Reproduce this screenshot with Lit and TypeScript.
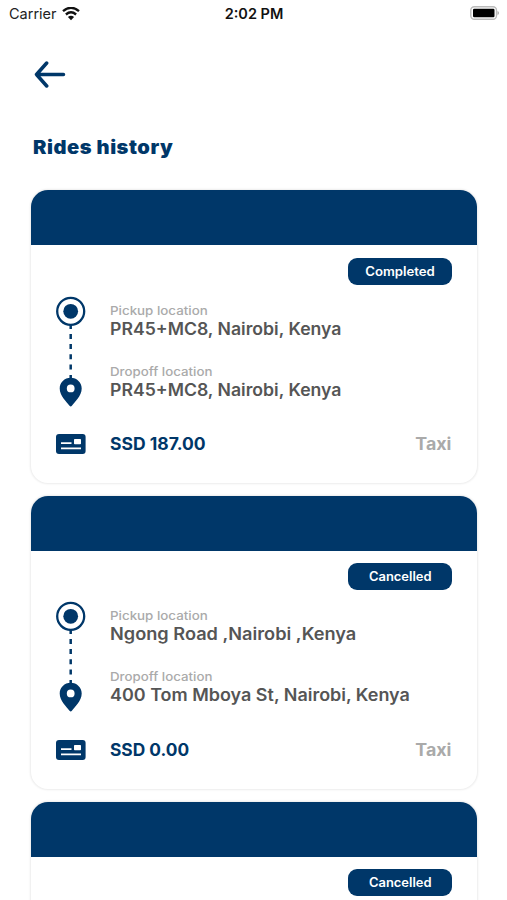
import { LitElement, html, css, svg, nothing } from "lit";
import { customElement, property } from "lit/decorators.js";

interface Label { text: string; stretch: number }
interface Trip { pickup: Label; dropoff: Label; fare: Label }
interface Ride { status: Label; trip?: Trip }

const rides: Ride[] = [
  {
    status: { text: "Completed", stretch: 1.055 },
    trip: {
      pickup: { text: "PR45+MC8, Nairobi, Kenya", stretch: 1.052 },
      dropoff: { text: "PR45+MC8, Nairobi, Kenya", stretch: 1.052 },
      fare: { text: "SSD 187.00", stretch: 1.03 },
    },
  },
  {
    status: { text: "Cancelled", stretch: 1.037 },
    trip: {
      pickup: { text: "Ngong Road ,Nairobi ,Kenya", stretch: 1.083 },
      dropoff: { text: "400 Tom Mboya St, Nairobi, Kenya", stretch: 1.07 },
      fare: { text: "SSD 0.00", stretch: 1.02 },
    },
  },
  { status: { text: "Cancelled", stretch: 1.037 } },
];

const wide = (l: Label) => html`<span class="wide" style="transform:scaleX(${l.stretch})">${l.text}</span>`;

@customElement("ride-card")
class RideCard extends LitElement {
  @property({ attribute: false }) ride!: Ride;

  static styles = css`
    :host { display: block; height: 293px; box-sizing: border-box; border-radius: 17px; background: #fff;
      box-shadow: 0 0 2px 1px #ececec; overflow: hidden; color: #003769; }
    .band { height: 55px; background: #003769; }
    .body { padding: 12.5px 25px 0; }
    .wide { display: inline-block; transform-origin: left; white-space: nowrap; }
    .status .wide { transform-origin: center; position: relative; left: 0.5px; }
    .kind .wide { transform-origin: right; }
    .status { margin-left: auto; width: 104px; height: 27px; border-radius: 9px; background: #003769; color: #fff;
      font-size: 12.5px; font-weight: 600; line-height: 27px; text-align: center; }
    .trip { display: grid; grid-template-columns: 30px 1fr; column-gap: 24px; margin-top: 11px; height: 112px; }
    .stops { padding-top: 7px; }
    .stop { height: 60.7px; }
    .caption { font-size: 12.2px; line-height: 16px; color: #aaa; font-weight: 500; }
    .place { font-size: 16.8px; line-height: 20px; color: #555; font-weight: 600; }
    .foot { display: flex; align-items: center; height: 22px; margin-top: 25.5px; font-size: 17px; font-weight: 700; }
    .fare { margin-left: 24px; }
    .kind { margin-left: auto; color: #aaa; font-weight: 650; }
    svg { display: block; flex: none; }
  `;

  private details(t: Trip) {
    return html`
      <div class="trip">
        <svg width="30" height="112" viewBox="0 0 30 112">
          ${svg`
          <circle cx="14.7" cy="15.3" r="13.5" fill="none" stroke="#003769" stroke-width="2.3"/>
          <circle cx="14.7" cy="15.3" r="7.4" fill="#003769"/>
          <path d="M14.7 29v4M14.7 38v5M14.7 48v5M14.7 58.3v5M14.7 68.6v5M14.7 79v4" stroke="#003769" stroke-width="2.5"/>
          <path fill-rule="evenodd" fill="#003769" d="M14.7 81.700C8.500 81.700 3.700 86.500 3.700 92.500c0 7.500 7 13.400 9.800 17.300q1.200 1.500 2.400 0C18.700 105.900 25.700 100 25.700 92.500c0-6-4.800-10.800-11-10.800ZM14.700 88.500a3.900 3.900 0 1 1 0 7.800a3.900 3.900 0 0 1 0-7.800Z"/>`}
        </svg>
        <div class="stops">
          <div class="stop">
            <div class="caption">${wide({ text: "Pickup location", stretch: 1.095 })}</div>
            <div class="place">${wide(t.pickup)}</div>
          </div>
          <div class="stop">
            <div class="caption">${wide({ text: "Dropoff location", stretch: 1.09 })}</div>
            <div class="place">${wide(t.dropoff)}</div>
          </div>
        </div>
      </div>
      <div class="foot">
        <svg width="30" height="20" viewBox="0 0 30 20">
          <rect width="29.6" height="20" rx="3" fill="#003769"/>
          <rect x="18" y="5" width="7" height="5.3" rx=".8" fill="#fff"/>
          <path d="M5 9.2h10.5M5 14.4h20" stroke="#fff" stroke-width="1.7"/>
        </svg>
        <span class="fare">${wide(t.fare)}</span>
        <span class="kind">${wide({ text: "Taxi", stretch: 1.05 })}</span>
      </div>`;
  }

  render() {
    const r = this.ride;
    return html`
      <div class="band"></div>
      <div class="body">
        <div class="status">${wide(r.status)}</div>
        ${r.trip ? this.details(r.trip) : nothing}
      </div>`;
  }
}

@customElement("app-root")
class AppRoot extends LitElement {
  static styles = css`
    :host { display: block; height: 900px; overflow: hidden; background: #fff; font-family: Inter, sans-serif; }
    .bar { display: grid; grid-template-columns: 1fr auto 1fr; align-items: center; height: 27px; padding: 0 8px 0 9px;
      font-size: 14.5px; color: #222; }
    .carrier { display: flex; align-items: center; gap: 5.5px; }
    .time { font-weight: 600; color: #111; }
    .battery { justify-self: end; margin-bottom: 1px; }
    svg { display: block; }
    .back { margin: 34px 0 0 34px; }
    .title { margin: 47px 0 0 33px; height: 24px; line-height: 24px; font-size: 18.8px; font-weight: 900; color: #003769; letter-spacing: .5px; }
    .title span { display: inline-block; transform: scaleX(1.07); transform-origin: left; }
    .list { display: flex; flex-direction: column; gap: 12.6px; margin: 30.4px 30.5px 0 31px; }
    ride-card { flex: none; }
  `;

  render() {
    return html`
      <div class="bar">
        <div class="carrier"><span>Carrier</span>
          <svg width="18" height="14" viewBox="0 0 18 14">
            <path d="M1 4.2Q9-2.6 17 4.2M3.9 7.5Q9 3.2 14.1 7.5" fill="none" stroke="#111" stroke-width="2.4"/>
            <path d="M9 13.2L5.9 10.1Q9 7.5 12.1 10.1Z" fill="#111"/>
          </svg>
        </div>
        <div class="time">2:02 PM</div>
        <svg class="battery" width="29" height="14" viewBox="0 0 29 14">
          <rect x=".8" y=".8" width="25.7" height="12.4" rx="3.5" fill="none" stroke="#bbb" stroke-width="1.4"/>
          <rect x="3" y="2.8" width="21.5" height="8.4" rx="1.2" fill="#000"/>
          <path d="M27.5 5v4q1.5-.6 1.5-2t-1.5-2" fill="#aaa"/>
        </svg>
      </div>
      <svg class="back" width="32" height="28" viewBox="0 0 32 28">
        <path d="M29.5 13.5H2.5M12.7 2L2.5 13.5L12.7 25" fill="none" stroke="#003769" stroke-width="3.5" stroke-linecap="round" stroke-linejoin="round"/>
      </svg>
      <div class="title"><span>Rides history</span></div>
      <div class="list">${rides.map((r) => html`<ride-card .ride=${r}></ride-card>`)}</div>`;
  }
}
